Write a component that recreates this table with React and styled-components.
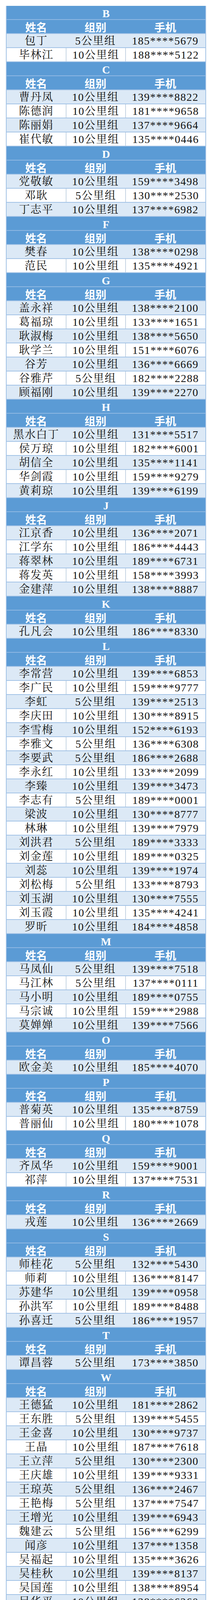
import React, { Component, Fragment } from 'react';
import styled, { createGlobalStyle, css } from 'styled-components';

const GlobalStyle = createGlobalStyle`
  html, body {
    margin: 0;
    padding: 0;
    background: #fff;
  }
`;

const Page = styled.main`
  width: 542px;
  box-sizing: border-box;
  padding: 15px 15px 17px 15px;
  background: #fff;
`;

const Table = styled.section`
  display: flex;
  flex-direction: column;
  width: 512px;
  border-left: 2px solid #a3c3e6;
  border-right: 2px solid #a3c3e6;
  box-sizing: border-box;
`;

const Row = styled.div`
  display: grid;
  grid-template-columns: 151px 152px 1fr;
  height: 36px;
  box-sizing: border-box;
  border-bottom: 2px solid #a3c3e6;
  font-size: 28px;
  line-height: 32px;
  letter-spacing: 1.5px;
`;

const TitleRow = styled.div`
  display: flex;
  align-items: center;
  justify-content: center;
  height: 36px;
  box-sizing: border-box;
  padding-top: 5px;
  background: #5b9bd5;
  border-bottom: 2px solid #8fb8e3;
  color: #fff;
  font-family: "Liberation Serif", serif;
  font-weight: 700;
  font-size: 28px;
  line-height: 28px;
`;

const HeadRow = styled(Row)`
  background: #5b9bd5;
  color: #fff;
  font-family: "Noto Sans CJK SC", sans-serif;
  font-weight: 700;
  letter-spacing: 0;
`;

const DataRow = styled(Row)`
  background: ${props => (props.striped ? '#dce9f6' : '#fff')};
  color: #111;
  font-family: "Liberation Serif", "Noto Serif CJK SC", "Noto Sans CJK SC", serif;
`;

const Cell = styled.div`
  display: flex;
  align-items: center;
  justify-content: center;
  padding-top: 2px;
  white-space: nowrap;
  box-sizing: border-box;
  ${props => props.divider && css`
    border-left: 2px solid #c7d5e4;
  `}
`;

const sections = [
  { letter: 'B', rows: [
    ['包丁', 5, '185****5679'],
    ['毕林江', 10, '188****5122'],
  ] },
  { letter: 'C', rows: [
    ['曹丹凤', 10, '139****8822'],
    ['陈德润', 10, '181****9658'],
    ['陈丽娟', 10, '137****9664'],
    ['崔代敏', 10, '135****0446'],
  ] },
  { letter: 'D', rows: [
    ['党敬敏', 10, '159****3498'],
    ['邓耿', 5, '130****2530'],
    ['丁志平', 10, '137****6982'],
  ] },
  { letter: 'F', rows: [
    ['樊春', 10, '138****0298'],
    ['范民', 10, '135****4921'],
  ] },
  { letter: 'G', rows: [
    ['盖永祥', 10, '138****2100'],
    ['葛福琼', 10, '133****1651'],
    ['耿淑梅', 10, '138****5650'],
    ['耿学兰', 10, '151****6076'],
    ['谷芳', 10, '136****6669'],
    ['谷雅芹', 5, '182****2288'],
    ['顾福刚', 10, '139****2270'],
  ] },
  { letter: 'H', rows: [
    ['黑水白丁', 10, '131****5517'],
    ['侯万琼', 10, '182****6001'],
    ['胡信全', 10, '135****1141'],
    ['华剑霞', 10, '159****9279'],
    ['黄莉琼', 10, '139****6199'],
  ] },
  { letter: 'J', rows: [
    ['江京香', 10, '136****2071'],
    ['江学东', 10, '186****4443'],
    ['蒋翠林', 10, '189****6731'],
    ['蒋发英', 10, '158****3993'],
    ['金建萍', 10, '138****8887'],
  ] },
  { letter: 'K', rows: [
    ['孔凡会', 10, '186****8330'],
  ] },
  { letter: 'L', rows: [
    ['李常营', 10, '139****6853'],
    ['李广民', 10, '159****9777'],
    ['李虹', 5, '139****2513'],
    ['李庆田', 10, '130****8915'],
    ['李雪梅', 10, '152****6193'],
    ['李雅文', 5, '136****6308'],
    ['李要武', 5, '186****2688'],
    ['李永红', 10, '133****2099'],
    ['李臻', 10, '139****3473'],
    ['李志有', 5, '189****0001'],
    ['梁波', 10, '130****8777'],
    ['林琳', 10, '139****7979'],
    ['刘洪君', 5, '189****3333'],
    ['刘金莲', 10, '189****0325'],
    ['刘蕊', 10, '139****1974'],
    ['刘松梅', 5, '133****8793'],
    ['刘玉湖', 10, '130****7555'],
    ['刘玉霞', 10, '135****4241'],
    ['罗昕', 10, '184****4858'],
  ] },
  { letter: 'M', rows: [
    ['马凤仙', 5, '139****7518'],
    ['马江林', 5, '137****0111'],
    ['马小明', 10, '189****0755'],
    ['马宗诚', 10, '159****2988'],
    ['莫婵婵', 10, '139****7566'],
  ] },
  { letter: 'O', rows: [
    ['欧金美', 10, '185****4070'],
  ] },
  { letter: 'P', rows: [
    ['普菊英', 10, '135****8759'],
    ['普丽仙', 10, '180****1078'],
  ] },
  { letter: 'Q', rows: [
    ['齐凤华', 10, '159****9001'],
    ['祁萍', 10, '137****7531'],
  ] },
  { letter: 'R', rows: [
    ['戎莲', 10, '136****2669'],
  ] },
  { letter: 'S', rows: [
    ['师桂花', 5, '132****5430'],
    ['师莉', 10, '136****8147'],
    ['苏建华', 10, '139****0958'],
    ['孙洪军', 10, '189****8488'],
    ['孙喜迁', 5, '186****1957'],
  ] },
  { letter: 'T', rows: [
    ['谭昌蓉', 5, '173****3850'],
  ] },
  { letter: 'W', rows: [
    ['王德猛', 10, '181****2862'],
    ['王东胜', 5, '139****5455'],
    ['王金喜', 10, '130****9737'],
    ['王晶', 10, '187****7618'],
    ['王立萍', 5, '130****2300'],
    ['王庆雄', 10, '139****9331'],
    ['王琼英', 5, '136****2467'],
    ['王艳梅', 5, '137****7547'],
    ['王增光', 10, '139****6943'],
    ['魏建云', 5, '156****6299'],
    ['闻彦', 10, '137****1358'],
    ['吴福起', 10, '135****3626'],
    ['吴桂秋', 10, '139****8137'],
    ['吴国莲', 10, '138****8954'],
    ['吴华平', 10, '138****6260'],
    ['吴培', 5, '139****3000'],
    ['吴亚东', 10, '136****0223'],
    ['吴亚平', 10, '151****3959'],
  ] },
  { letter: 'X', rows: [
    ['谢建岳', 10, '139****1117'],
    ['谢兰梅', 10, '138****4903'],
    ['谢小清', 5, '138****1637'],
    ['徐宏伟', 10, '187****2977'],
  ] },
  { letter: 'Y', rows: [
    ['阎锦华', 10, '135****9038'],
    ['杨森', 10, '159****8999'],
    ['杨维春', 5, '135****1627'],
    ['杨晓凤', 10, '158****0516'],
    ['姚晓慧', 5, '139****2678'],
    ['伊万', 10, '137****6982'],
    ['岳凤', 10, '136****1171'],
  ] },
  { letter: 'Z', rows: [
    ['张桂荣', 5, '188****7789'],
    ['张海清', 10, '139****8748'],
    ['张杰', 10, '156****4700'],
    ['张景坤', 10, '138****5600'],
    ['张仁芝', 10, '157****9198'],
    ['张晓萍', 10, '136****6543'],
    ['张应实', 10, '185****6299'],
    ['赵宏艳', 5, '139****0501'],
    ['赵敏', 5, '132****6856'],
    ['赵萍', 10, '176****2997'],
    ['赵艳春', 5, '137****6252'],
    ['赵勇刚', 10, '139****3382'],
    ['周海燕', 10, '139****1000'],
    ['周绍新', 10, '181****6743'],
    ['周玉平', 10, '139****0573'],
    ['周遵红', 5, '139****5688'],
    ['朱德英', 10, '137****7980'],
    ['自黑喵', 10, '138****2605'],
  ] },
];

const Section = ({ letter, rows }) => (
  <Fragment>
    <TitleRow>{letter}</TitleRow>
    <HeadRow>
      <Cell>姓名</Cell>
      <Cell>组别</Cell>
      <Cell>手机</Cell>
    </HeadRow>
    {rows.map(([name, km, phone], i) => {
      const striped = i % 2 === 0;
      return (
        <DataRow key={name + phone} striped={striped}>
          <Cell>{name}</Cell>
          <Cell divider={!striped}>{km}公里组</Cell>
          <Cell divider={!striped}>{phone}</Cell>
        </DataRow>
      );
    })}
  </Fragment>
);

class App extends Component {
  render() {
    return (
      <Fragment>
        <GlobalStyle/>
        <Page>
          <Table>
            {sections.map(s => <Section key={s.letter} letter={s.letter} rows={s.rows}/>)}
          </Table>
        </Page>
      </Fragment>
    );
  }
}

export default App;
